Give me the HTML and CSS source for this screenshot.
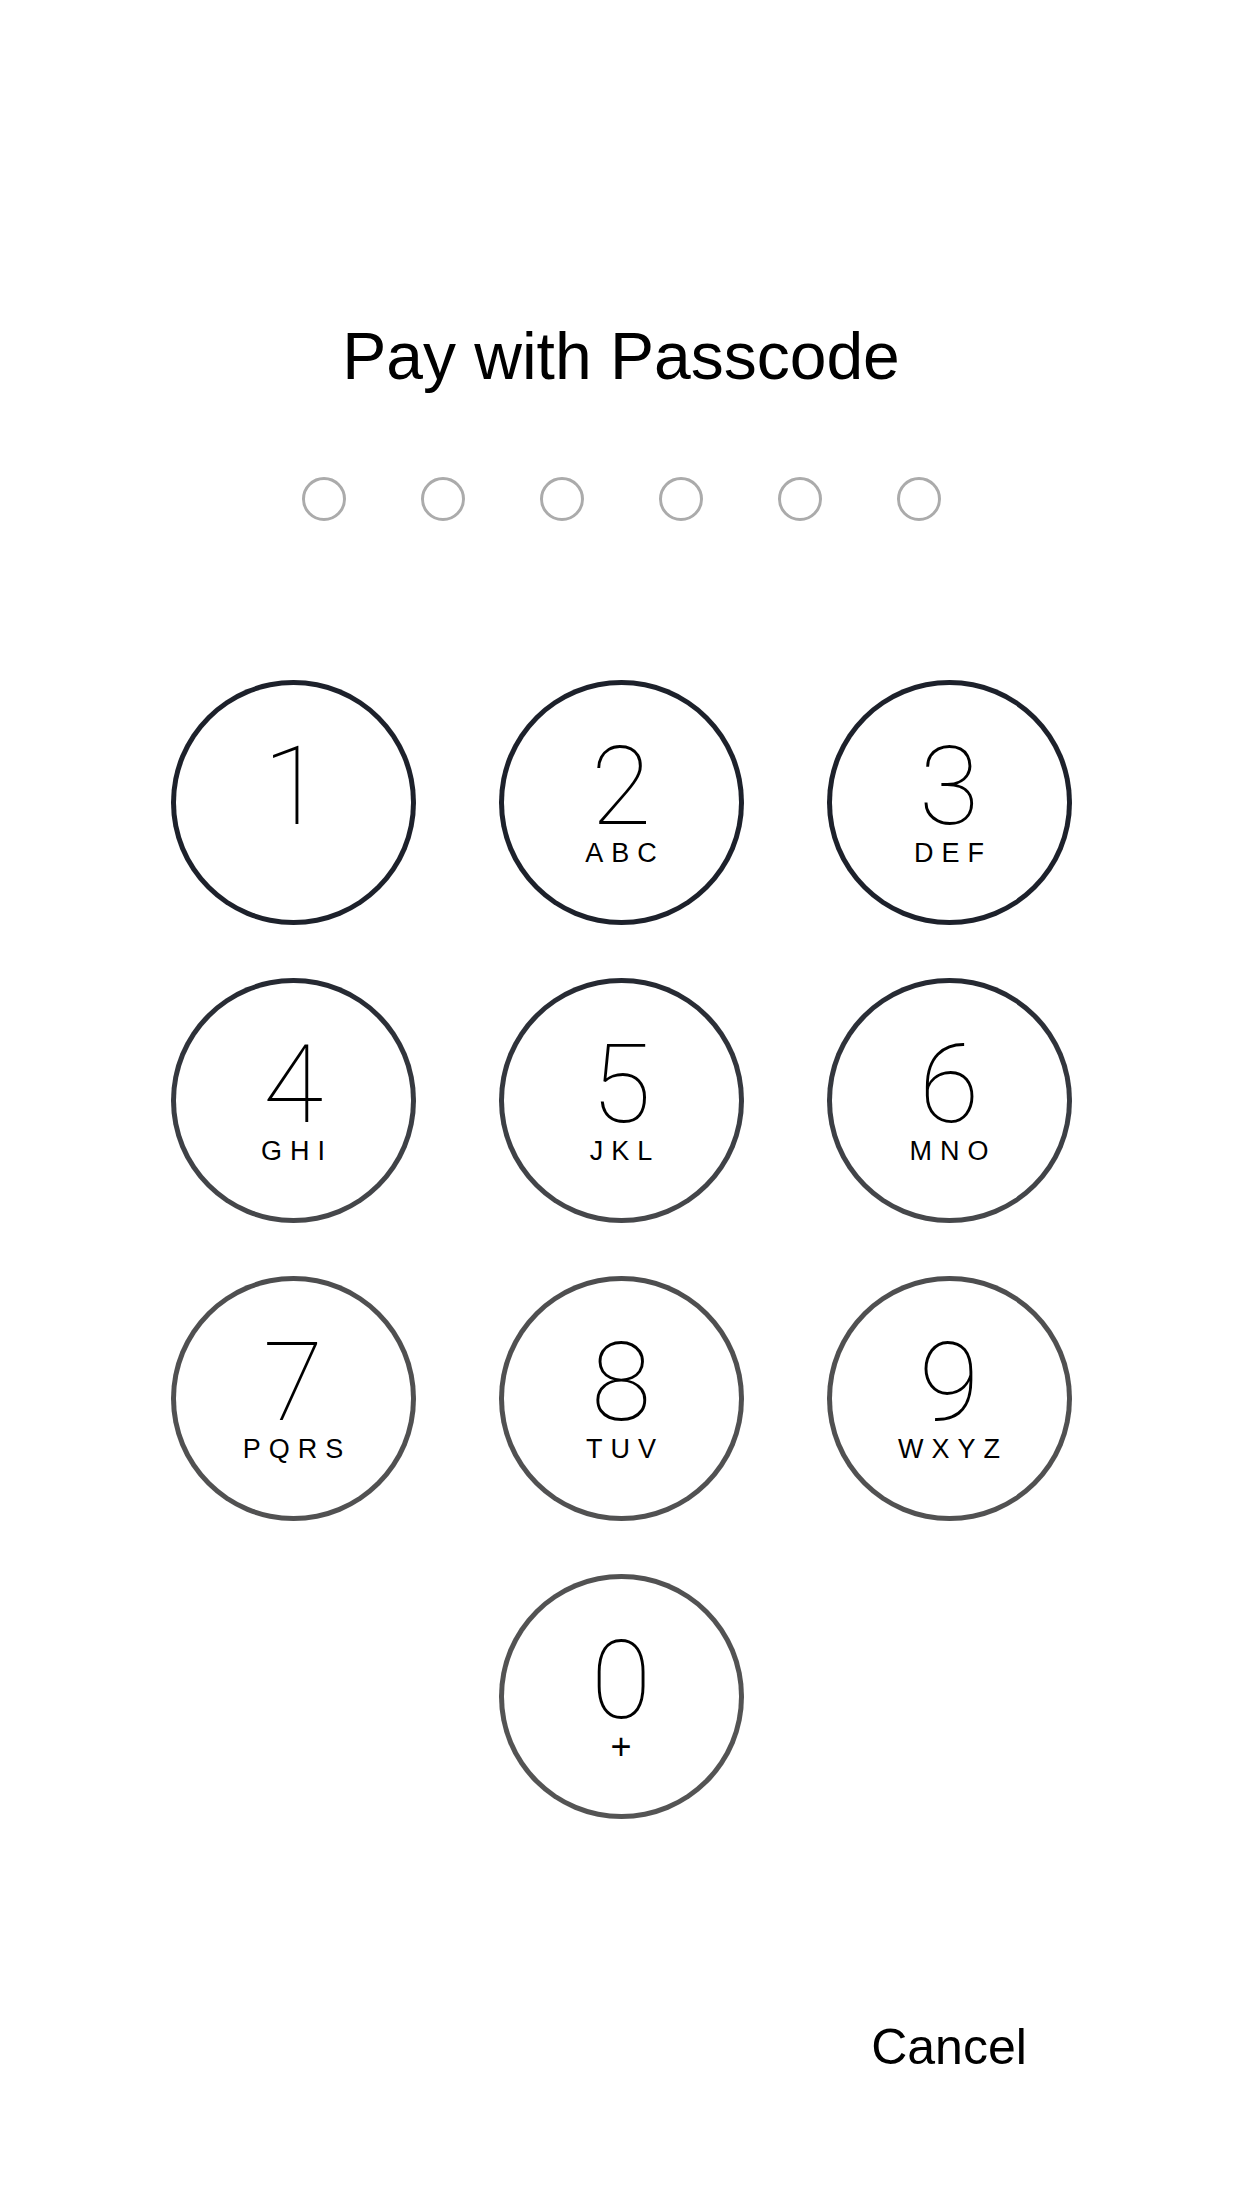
FILE: index.html
```html
<!DOCTYPE html>
<html>
<head>
<meta charset="utf-8">
<link rel="stylesheet" href="styles.css">
</head>
<body>
<main class="screen">
  <h1 class="title">Pay with Passcode</h1>
  <div class="dots">
    <span class="dot"></span><span class="dot"></span><span class="dot"></span>
    <span class="dot"></span><span class="dot"></span><span class="dot"></span>
  </div>
  <div class="keypad">
    <div class="key"><span class="digit">1</span></div>
    <div class="key"><span class="digit">2</span><span class="letters">ABC</span></div>
    <div class="key"><span class="digit">3</span><span class="letters">DEF</span></div>
    <div class="key"><span class="digit">4</span><span class="letters">GHI</span></div>
    <div class="key"><span class="digit">5</span><span class="letters">JKL</span></div>
    <div class="key"><span class="digit">6</span><span class="letters">MNO</span></div>
    <div class="key"><span class="digit">7</span><span class="letters">PQRS</span></div>
    <div class="key"><span class="digit">8</span><span class="letters">TUV</span></div>
    <div class="key"><span class="digit">9</span><span class="letters">WXYZ</span></div>
    <div class="key key-zero"><span class="digit">0</span><span class="letters plus">+</span></div>
  </div>
  <div class="footer">
    <span class="cancel">Cancel</span>
  </div>
</main>
</body>
</html>
```

FILE: styles.css
```css
html, body {
  margin: 0;
  padding: 0;
  background: #ffffff;
}

.screen {
  width: 1242px;
  height: 2208px;
  display: flex;
  flex-direction: column;
  align-items: center;
  font-family: "Liberation Sans", Arial, sans-serif;
  color: #000;
}

.title {
  margin: 316px 0 0 0;
  font-size: 66px;
  font-weight: 400;
  line-height: 80px;
  letter-spacing: 0;
}

.dots {
  margin-top: 81px;
  display: flex;
  gap: 75px;
}

.dot {
  width: 44px;
  height: 44px;
  box-sizing: border-box;
  border: 3px solid #ababab;
  border-radius: 50%;
}

.keypad {
  margin-top: 159px;
  display: grid;
  grid-template-columns: repeat(3, 245px);
  grid-auto-rows: 245px;
  column-gap: 83px;
  row-gap: 53px;
}

.key {
  box-sizing: border-box;
  width: 245px;
  height: 245px;
  border-radius: 50%;
  border: 5px solid transparent;
  background:
    linear-gradient(#fff, #fff) padding-box,
    linear-gradient(180deg, #1c202a 0px, #1d212b 930px, #3b3e44 1120px, #4f4f50 1300px, #545454 1800px) border-box;
  background-attachment: scroll, fixed;
  display: flex;
  flex-direction: column;
  align-items: center;
}

.key-zero {
  grid-column: 2;
}

.digit {
  margin-top: 62px;
  font-family: Roboto, Inter, "Liberation Sans", sans-serif;
  font-weight: 100;
  font-size: 110px;
  line-height: 80px;
  height: 80px;
}

.letters {
  margin-top: 10px;
  font-family: "Liberation Sans", Arial, sans-serif;
  font-size: 27px;
  line-height: 32px;
  letter-spacing: 8px;
  padding-left: 8px;
}

.plus {
  font-size: 36px;
  letter-spacing: 0;
  padding-left: 0;
}

.footer {
  width: 1242px;
  margin-top: 196px;
  display: grid;
  grid-template-columns: repeat(3, 245px);
  column-gap: 83px;
  justify-content: center;
}

.cancel {
  grid-column: 3;
  justify-self: center;
  font-size: 50px;
  line-height: 64px;
}
```
